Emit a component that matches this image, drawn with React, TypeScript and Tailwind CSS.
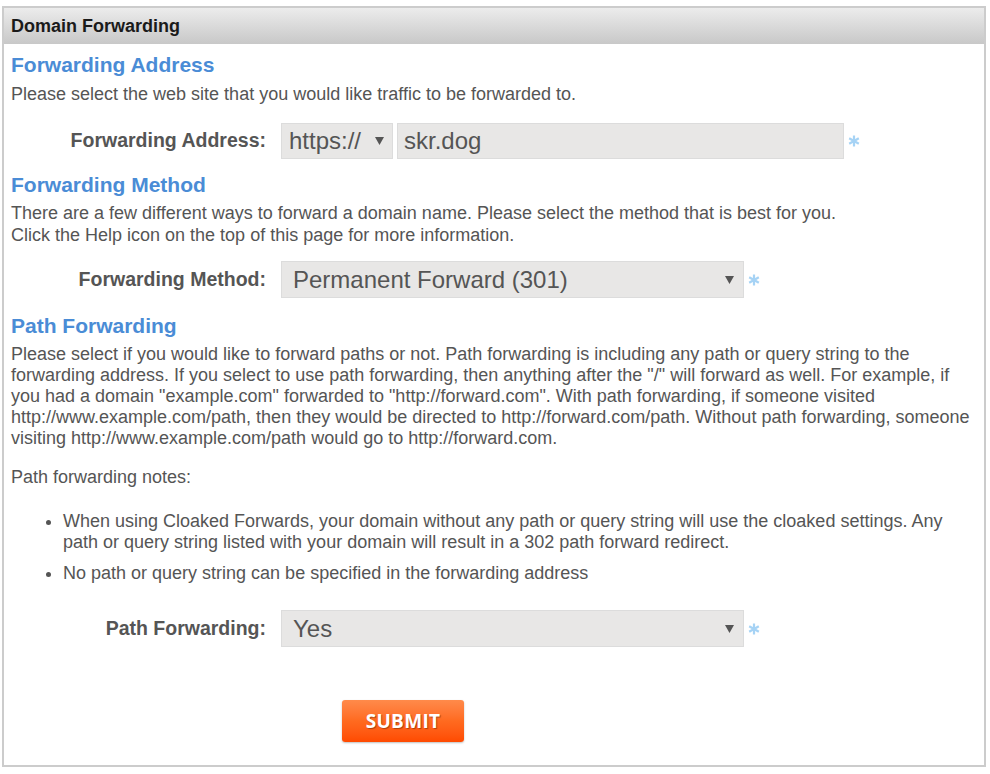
import React from "react";

function Caret() {
  return (
    <svg width="9" height="8" viewBox="0 0 9 8" className="shrink-0">
      <path d="M0 0 L9 0 L4.5 8 Z" fill="#555" />
    </svg>
  );
}

function Star() {
  return (
    <svg width="12" height="12" viewBox="0 0 12 12" className="ml-[4px] shrink-0">
      <g stroke="#a6d3f5" strokeWidth="2.2" strokeLinecap="butt">
        <line x1="6" y1="0.5" x2="6" y2="11.5" />
        <line x1="1.2" y1="3.2" x2="10.8" y2="8.8" />
        <line x1="1.2" y1="8.8" x2="10.8" y2="3.2" />
      </g>
    </svg>
  );
}

function Row({ label, children, top }: { label: string; children: React.ReactNode; top: string }) {
  return (
    <div className={`flex items-center ${top}`}>
      <div className="w-[255px] text-right text-[19.5px] font-bold text-[#555] whitespace-nowrap">{label}</div>
      <div className="ml-[15px] flex items-center">{children}</div>
    </div>
  );
}

export default function App() {
  return (
    <div
      className="w-[990px] h-[774px] bg-white pt-[6px] pl-[2px]"
      style={{ fontFamily: '"Liberation Sans", Arial, sans-serif' }}
    >
      <div className="w-[984px] h-[761px] border-2 border-[#cccccc] bg-white">
        <div className="h-[36px] bg-gradient-to-b from-[#ececec] to-[#c8c8c8] flex items-center pl-[7px]">
          <span className="text-[18px] font-bold text-[#1a1a1a]">Domain Forwarding</span>
        </div>
        <div className="pl-[7px] pr-[8px] text-[#555]">
          <h2 className="mt-[9px] text-[21px] leading-[24px] font-bold text-[#4a8cd6]">Forwarding Address</h2>
          <p className="mt-[6px] text-[18px] leading-[22px]">
            Please select the web site that you would like traffic to be forwarded to.
          </p>
          <Row label="Forwarding Address:" top="mt-[18px]">
            <div className="w-[112px] h-[36px] bg-[#e8e7e6] border border-[#dcdcdc] flex items-center justify-between pl-[7px] pr-[8px] text-[24px] text-[#555]">
              <span>https://</span>
              <Caret />
            </div>
            <div className="ml-[4px] w-[447px] h-[36px] bg-[#e8e7e6] border border-[#dcdcdc] flex items-center pl-[6px] text-[24px] text-[#555]">
              skr.dog
            </div>
            <Star />
          </Row>
          <h2 className="mt-[14px] text-[21px] leading-[24px] font-bold text-[#4a8cd6]">Forwarding Method</h2>
          <p className="mt-[5px] text-[18px] leading-[22px]">
            There are a few different ways to forward a domain name. Please select the method that is best for you.
            <br />
            Click the Help icon on the top of this page for more information.
          </p>
          <Row label="Forwarding Method:" top="mt-[15px]">
            <div className="w-[463px] h-[37px] bg-[#e8e7e6] border border-[#dcdcdc] flex items-center justify-between pl-[11px] pr-[9px] text-[24px] text-[#555]">
              <span>Permanent Forward (301)</span>
              <Caret />
            </div>
            <Star />
          </Row>
          <h2 className="mt-[16px] text-[21px] leading-[24px] font-bold text-[#4a8cd6]">Path Forwarding</h2>
          <p className="mt-[6px] text-[18px] leading-[21px]">
            Please select if you would like to forward paths or not. Path forwarding is including any path or query string to the
            forwarding address. If you select to use path forwarding, then anything after the "/" will forward as well. For example, if
            you had a domain "example.com" forwarded to "http://forward.com". With path forwarding, if someone visited
            http://www.example.com/path, then they would be directed to http://forward.com/path. Without path forwarding, someone
            visiting http://www.example.com/path would go to http://forward.com.
          </p>
          <p className="mt-[18px] text-[18px] leading-[21px]">Path forwarding notes:</p>
          <ul className="mt-[23px] pl-[52px] pr-[20px] list-disc text-[18px] leading-[21px]">
            <li>
              When using Cloaked Forwards, your domain without any path or query string will use the cloaked settings. Any
              path or query string listed with your domain will result in a 302 path forward redirect.
            </li>
            <li className="mt-[10px]">No path or query string can be specified in the forwarding address</li>
          </ul>
          <Row label="Path Forwarding:" top="mt-[26px]">
            <div className="w-[463px] h-[37px] bg-[#e8e7e6] border border-[#dcdcdc] flex items-center justify-between pl-[11px] pr-[9px] text-[24px] text-[#555]">
              <span>Yes</span>
              <Caret />
            </div>
            <Star />
          </Row>
          <div className="mt-[53px] pl-[331px]">
            <button
              className="w-[122px] h-[42px] rounded-[3px] bg-gradient-to-b from-[#ff8a4a] via-[#ff6a1f] to-[#ff4a00] text-white text-[19px] font-bold tracking-[0.3px] shadow-[0_1px_2px_rgba(0,0,0,0.25)]"
              style={{ fontFamily: '"Open Sans", sans-serif', textShadow: "1px 1px 1px rgba(120,40,0,0.6)" }}
            >
              SUBMIT
            </button>
          </div>
        </div>
      </div>
    </div>
  );
}
